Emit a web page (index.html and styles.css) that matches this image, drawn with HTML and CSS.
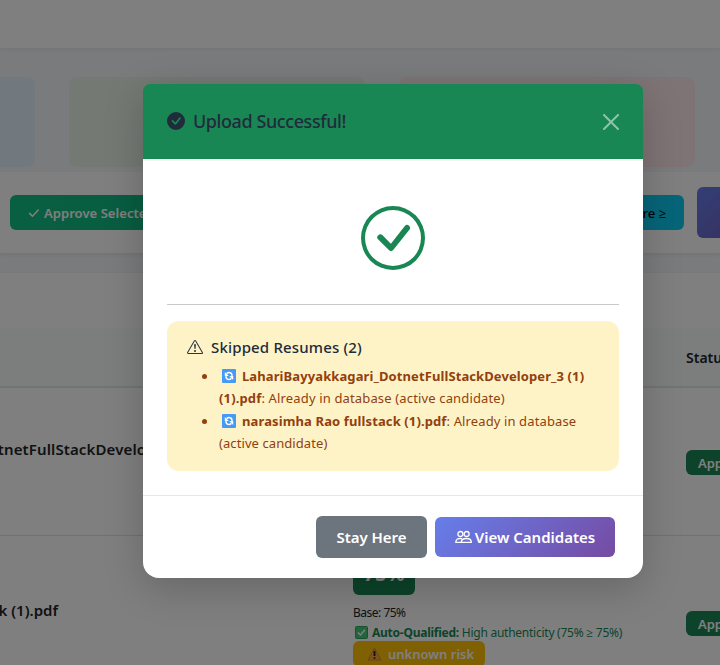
FILE: index.html
```html
<!DOCTYPE html>
<html lang="en">
<head>
<meta charset="utf-8">
<title>Upload Successful</title>
<link rel="stylesheet" href="styles.css">
</head>
<body>
<main class="page">
  <header class="topbar"></header>
  <section class="stats">
    <div class="stat stat-blue"></div>
    <div class="stat stat-green"></div>
    <div class="stat stat-red"></div>
  </section>
  <section class="toolbar">
    <button class="tool approve"><svg width="16" height="16" viewBox="0 0 16 16"><path d="M3.6 8.4l2.9 2.9 5.7-6.2" fill="none" stroke="currentColor" stroke-width="1.5" stroke-linecap="round" stroke-linejoin="round"/></svg><span class="t-approve">Approve Selected</span></button>
    <button class="tool score"><span class="t-score">Score ≥</span></button>
    <button class="tool more" aria-label="More"></button>
  </section>
  <section class="table">
    <div class="caption"></div>
    <div class="row head"><div class="name"></div><div class="info"></div><div class="status"><span class="t-status">Status</span></div></div>
    <div class="row first"><div class="name"><span class="t-name">LahariBayyakkagari_DotnetFullStackDeveloper_3 (1)</span></div><div class="info"></div><div class="status"><span class="pill">Approved</span></div></div>
    <div class="row second"><div class="name name2"><span class="t-name2">narasimha Rao fullstack (1).pdf</span></div>
      <div class="info">
        <div class="percent">75%</div>
        <div class="base"><span class="t-base">Base: 75%</span></div>
        <div class="qualified"><svg width="13" height="13" viewBox="0 0 13 13"><rect x=".5" y=".5" width="12" height="12" rx="1" fill="#49c878" stroke="#2fa65f"/><path d="M3 6.5l2.4 2.5L10 3.8" fill="none" stroke="#fff" stroke-width="1.5"/></svg><span class="t-qual"><b>Auto-Qualified:</b> High authenticity (75% ≥ 75%)</span></div>
        <div class="risk"><svg width="15" height="14" viewBox="0 0 15 14"><path d="M7.5 1L14 13H1z" fill="#f6a63a" stroke="#d98a30" stroke-linejoin="round"/><path d="M7.5 4v5M7.5 10.3v1.5" stroke="#222" stroke-width="1.8"/></svg><span class="t-risk">unknown risk</span></div>
      </div>
      <div class="status"><span class="pill">Approved</span></div></div>
  </section>
</main>
<div class="backdrop">
  <div class="modal" role="dialog">
    <div class="modal-header">
      <svg class="head-icon" width="18" height="18" viewBox="0 0 16 16"><path fill="#212b3b" d="M16 8A8 8 0 1 1 0 8a8 8 0 0 1 16 0m-3.97-3.03a.75.75 0 0 0-1.08.022L7.477 9.417 5.384 7.323a.75.75 0 0 0-1.06 1.06L6.97 11.03a.75.75 0 0 0 1.079-.02l3.992-4.99a.75.75 0 0 0-.01-1.05z"/></svg>
      <h5 class="title"><span class="t-title">Upload Successful!</span></h5>
      <svg class="close" width="16" height="16" viewBox="0 0 16 16"><path fill="#fff" d="M.293.293a1 1 0 0 1 1.414 0L8 6.586 14.293.293a1 1 0 1 1 1.414 1.414L9.414 8l6.293 6.293a1 1 0 0 1-1.414 1.414L8 9.414l-6.293 6.293a1 1 0 0 1-1.414-1.414L6.586 8 .293 1.707a1 1 0 0 1 0-1.414"/></svg>
    </div>
    <div class="modal-body">
      <div class="check"><svg width="64" height="64" viewBox="0 0 16 16" fill="#198754"><path d="M8 15A7 7 0 1 1 8 1a7 7 0 0 1 0 14m0 1A8 8 0 1 0 8 0a8 8 0 0 0 0 16"/><path d="M10.97 4.97a.75.75 0 0 1 1.071 1.05l-3.992 4.99a.75.75 0 0 1-1.08.02L4.324 8.384a.75.75 0 1 1 1.06-1.06l2.094 2.093 3.473-4.425z"/></svg></div>
      <hr class="rule">
      <div class="alert">
        <div class="alert-head"><svg width="16" height="16" viewBox="0 0 16 16" fill="#2b3440"><path d="M7.938 2.016A.13.13 0 0 1 8.002 2a.13.13 0 0 1 .063.016.15.15 0 0 1 .054.057l6.857 11.667c.036.06.035.124.002.183a.2.2 0 0 1-.054.06.1.1 0 0 1-.066.017H1.146a.1.1 0 0 1-.066-.017.2.2 0 0 1-.054-.06.18.18 0 0 1 .002-.183L7.884 2.073a.15.15 0 0 1 .054-.057m1.044-.45a1.13 1.13 0 0 0-1.96 0L.165 13.233c-.457.778.091 1.767.98 1.767h13.713c.889 0 1.438-.99.98-1.767z"/><path d="M7.002 12a1 1 0 1 1 2 0 1 1 0 0 1-2 0M7.1 5.995a.905.905 0 1 1 1.8 0l-.35 3.507a.552.552 0 0 1-1.1 0z"/></svg><span class="t-skip">Skipped Resumes (2)</span></div>
        <ul class="list">
          <li><div class="line"><svg class="sync" width="14" height="14" viewBox="0 0 14 14"><rect width="14" height="14" rx="1" fill="#459af5"/><path d="M4.6 4.6Q6.8 2.7 9 4.2q1.2 1 .9 2.7M9.4 9.4Q7.2 11.3 5 9.8 3.8 8.8 4.1 7.1" fill="none" stroke="#fff" stroke-width="1.6"/><path d="M2.8 3v4h4zM11.2 11V7h-4z" fill="#fff"/></svg><b class="t-l1">LahariBayyakkagari_DotnetFullStackDeveloper_3 (1)</b></div>
          <div class="line"><span class="t-l2"><b>(1).pdf</b>: Already in database (active candidate)</span></div></li>
          <li><div class="line"><svg class="sync" width="14" height="14" viewBox="0 0 14 14"><rect width="14" height="14" rx="1" fill="#459af5"/><path d="M4.6 4.6Q6.8 2.7 9 4.2q1.2 1 .9 2.7M9.4 9.4Q7.2 11.3 5 9.8 3.8 8.8 4.1 7.1" fill="none" stroke="#fff" stroke-width="1.6"/><path d="M2.8 3v4h4zM11.2 11V7h-4z" fill="#fff"/></svg><span class="t-l3"><b>narasimha Rao fullstack (1).pdf</b>: Already in database</span></div>
          <div class="line"><span class="t-l4">(active candidate)</span></div></li>
        </ul>
      </div>
    </div>
    <div class="modal-footer">
      <button class="btn stay"><span class="t-stay">Stay Here</span></button>
      <button class="btn view"><svg width="17" height="16" viewBox="0 0 17 16" fill="none" stroke="#fff" stroke-width="1.3"><circle cx="5.4" cy="5" r="2.5"/><circle cx="11.6" cy="5" r="2.5"/><path d="M6.3 13.3q0-3.8 5.1-3.8 4.9 0 4.9 3.8zM7 9.7Q.9 8.6.8 13.3h5.5"/></svg><span class="t-view">View Candidates</span></button>
    </div>
  </div>
</div>
</body>
</html>
```
FILE: styles.css
```css
* { box-sizing: border-box; }
body { margin: 0; width: 720px; height: 665px; overflow: hidden; position: relative; background: #f5f7fa; font-family: "Noto Sans", "Open Sans", sans-serif; color: #212529; }
button { border: 0; font: inherit; padding: 0; }
span, b { white-space: nowrap; }
svg { flex: none; display: block; }
.page { display: flex; flex-direction: column; height: 665px; overflow: hidden; }
.topbar { height: 48px; flex: none; background: #fff; box-shadow: 0 2px 4px rgba(0,0,0,.06); }
.stats { height: 124px; flex: none; padding-top: 29px; display: flex; gap: 34px; }
.stat { height: 90px; width: 296px; flex: none; border-radius: 8px; }
.stat-blue { width: 35px; border-radius: 0 8px 8px 0; background: #e3f0fd; }
.stat-green { background: #e8f3e8; }
.stat-red { background: #fee9eb; }
.toolbar { height: 81px; flex: none; background: #fff; display: flex; align-items: center; padding-left: 10px; box-shadow: 0 2px 4px rgba(0,0,0,.07); }
.tool { height: 35px; border-radius: 6px; font-size: 13px; font-weight: 600; flex: none; display: flex; align-items: center; }
.approve { width: 180px; padding-left: 16px; gap: 2px; color: #fff; background: linear-gradient(90deg, #13bf84, #10b981); }
.t-approve { letter-spacing: .05px; }
.score { width: 110px; margin-left: 384px; padding-right: 18px; justify-content: flex-end; background: #0dcaf0; color: #000; font-weight: 500; }
.more { width: 110px; height: 51px; margin-left: 13px; background: linear-gradient(135deg, #667eea, #764ba2); }
.table { margin-top: 20px; flex: 1; background: #fff; box-shadow: 0 -1px 3px rgba(0,0,0,.04); }
.caption { height: 55px; }
.row { display: grid; grid-template-columns: 353px 333px 34px; }
.head { height: 60px; background: #f8fbfa; border-bottom: 2px solid #e3e8e9; align-items: center; font-weight: 600; font-size: 14px; }
.first { height: 148px; border-bottom: 1px solid #dee2e6; align-items: center; }
.first .status { padding-top: 2px; }
.name { width: 209px; display: flex; justify-content: flex-end; font-size: 15px; font-weight: 600; padding-bottom: 26px; }
.t-name { letter-spacing: .12px; }
.name2 { width: 58px; padding: 64px 0 0; }
.second { height: 180px; }
.pill { display: flex; align-items: center; height: 25px; width: 80px; border-radius: 6px; background: #198754; color: #fff; font-weight: 600; font-size: 13px; padding-left: 12px; }
.second .status { padding-top: 75px; }
.percent { margin-top: 20px; height: 39px; width: 62px; border-radius: 6px; background: #198754; color: #fff; font-weight: 700; font-size: 20px; line-height: 36px; text-align: center; }
.base { height: 19px; font-size: 12px; line-height: 18px; margin-top: 9px; letter-spacing: -.5px; }
.qualified { display: flex; align-items: center; gap: 4px; padding-left: 2px; height: 18px; padding-top: 1px; font-size: 12px; color: #198754; letter-spacing: -.25px; }
.risk { width: 132px; height: 26px; border-radius: 6px; background: #ffc107; color: #fff; display: flex; align-items: center; gap: 6px; padding-left: 14px; font-size: 13px; font-weight: 600; }
.backdrop { position: absolute; inset: 0; background: rgba(0,0,0,.5); display: flex; justify-content: center; align-items: flex-start; padding-top: 84px; padding-left: 66px; }
.modal { width: 500px; height: 494px; background: linear-gradient(#198754 30px, #fff 30px); border-radius: 8px 8px 16px 16px; box-shadow: 0 10px 40px rgba(0,0,0,.2); }
.modal-header { height: 77px; border-radius: 8px 8px 0 0; background: #198754; border-bottom: 2px solid #f3f5f5; padding: 0 24px; display: flex; align-items: center; }
.head-icon { margin-bottom: 2px; }
.title { margin: 0 0 2px 8px; flex: 1; font-size: 18px; font-weight: 500; letter-spacing: -.42px; color: #212b3b; }
.close { opacity: .5; }
.modal-body { padding: 45px 24px 24px; height: 334px; }
.check { display: flex; justify-content: center; }
.rule { border: 0; border-top: 1px solid #c8c9ca; margin: 34px 0 16px; }
.alert { height: 150px; border-radius: 12px; background: #fef3c7; padding: 15px 20px; color: #92400e; font-size: 13px; }
.alert-head { height: 22px; display: flex; align-items: center; gap: 8px; font-size: 15px; font-weight: 500; letter-spacing: .16px; color: #212b3b; }
.list { margin: 7px 0 0; padding-left: 32px; list-style: none; }
.list li::before { content: ""; float: left; width: 5px; height: 5px; margin: 9px 0 0 -17px; border-radius: 50%; background: #92400e; }
.line { display: flex; align-items: center; height: 22.3px; gap: 6px; }
.t-l1 { letter-spacing: .1px; }
.t-l2 { letter-spacing: .15px; }
.t-l3 { letter-spacing: .12px; }
.t-l4 { letter-spacing: .08px; }
.sync { margin-left: 3px; }
.modal-footer { height: 83px; border-top: 1px solid #e5e7eb; display: flex; justify-content: flex-end; align-items: center; padding-right: 28px; gap: 8px; }
.btn { height: 42px; width: 111px; border-radius: 6px; color: #fff; font-weight: 600; font-size: 15px; display: flex; align-items: center; justify-content: center; }
.stay { background: #6c757d; }
.t-stay { letter-spacing: -.05px; }
.view { width: 180px; height: 40px; gap: 3px; background: linear-gradient(135deg, #667eea, #764ba2); }
```
